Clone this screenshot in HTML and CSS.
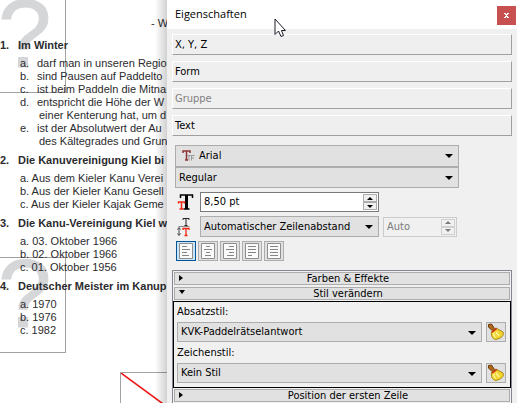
FILE: index.html
```html
<!DOCTYPE html>
<html lang="de">
<head>
<meta charset="utf-8">
<title>Eigenschaften</title>
<link rel="stylesheet" href="styles.css">
</head>
<body>
<svg class="defs" aria-hidden="true">
  <symbol id="broom" viewBox="0 0 18 18">
    <path d="M1.500 1.500 L4.500 1 L7.500 5.500 L5 7.500 L1.500 4 Z" fill="#b06a1c" stroke="#6b3b0a"/>
    <path d="M4.500 8.500 L9 5 L16 9 C17.500 12 14.500 15.500 8.500 16.500 C5 15.500 4 12.500 4.500 8.500 Z" fill="#f2d531" stroke="#a8860c"/>
    <path d="M6.500 10 L8 14.500 M9 9 L12 13" stroke="#fff59a" stroke-width="1.500" fill="none"/>
    <path d="M5 9 L9.500 5.500" stroke="#c8321e" stroke-width="1.600"/>
  </symbol>
</svg>
<div class="screen">
  <main class="page">
    <div class="frame frame-top"><span>?</span></div>
    <div class="frame frame-mid"><span>?</span></div>
    <div class="frame frame-empty"><svg viewBox="0 0 120 88"><path d="M0 0 L120 88" stroke="#f01414" stroke-width="1.500"/></svg></div>
    <div class="copy">
      <p class="intro">- W</p>
      <h2><b>1.</b>Im Winter</h2>
      <ul class="wide">
        <li><i>a.</i>darf man in unseren Regio</li>
        <li><i>b.</i>sind Pausen auf Paddelto</li>
        <li><i>c.</i>ist beim Paddeln die Mitna</li>
        <li><i>d.</i>entspricht die Höhe der W</li>
        <li class="cont">einer Kenterung hat, um d</li>
        <li><i>e.</i>ist der Absolutwert der Au</li>
        <li class="cont">des Kältegrades und Grun</li>
      </ul>
      <h2><b>2.</b>Die Kanuvereinigung Kiel bi</h2>
      <ul>
        <li>a. Aus dem Kieler Kanu Verei</li>
        <li>b. Aus der Kieler Kanu Gesell</li>
        <li>c. Aus der Kieler Kajak Geme</li>
      </ul>
      <h2><b>3.</b>Die Kanu-Vereinigung Kiel w</h2>
      <ul>
        <li>a. 03. Oktober 1966</li>
        <li>b. 02. Oktober 1966</li>
        <li>c. 01. Oktober 1956</li>
      </ul>
      <h2><b>4.</b>Deutscher Meister im Kanup</h2>
      <ul>
        <li>a. 1970</li>
        <li>b. 1976</li>
        <li>c. 1982</li>
      </ul>
    </div>
  </main>

  <aside class="panel">
    <header class="titlebar">
      <h1>Eigenschaften</h1>
      <button class="close" aria-label="Schließen"><svg width="5" height="5" viewBox="0 0 5 5"><path d="M0 .5H2M3 .5H5M1 1.500H4M2 2.500H3M1 3.500H4M0 4.500H2M3 4.500H5" stroke="#fff"/></svg></button>
    </header>
    <div class="body">
      <nav class="sections">
        <button>X, Y, Z</button>
        <button>Form</button>
        <button disabled>Gruppe</button>
        <button>Text</button>
      </nav>

      <div class="text-tools">
        <div class="fonts">
          <div class="combo font-family">
            <svg class="tt" width="13" height="12" viewBox="0 0 13 12"><path d="M1 3V1H8V3M4.500 1V10M3 10H6" fill="none" stroke="#8e3434" stroke-width="1.500"/><path d="M5 5.500H9M7 5.500V10.500M9.500 10.500V5.500H12.500M9.500 8H12" fill="none" stroke="#999"/></svg>
            <select aria-label="Schriftfamilie"><option>Arial</option></select>
          </div>
          <div class="combo"><select aria-label="Schriftschnitt"><option>Regular</option></select></div>
        </div>
        <div class="row">
          <svg class="tool-icon" width="18" height="18" viewBox="0 0 18 18"><path d="M4 5V2H16V5M7 16H13" fill="none" stroke="#000" stroke-width="1.500"/><path d="M10 2V16" stroke="#000" stroke-width="3"/><path d="M2 10.500V9H8V10.500M5 9V16M3 16H7" fill="none" stroke="#f02814" stroke-width="1.500"/></svg>
          <div class="spin size">
            <input type="text" value="8,50 pt" aria-label="Schriftgröße">
            <div class="steps"><button aria-label="Größer"></button><button class="down" aria-label="Kleiner"></button></div>
          </div>
        </div>
        <div class="row">
          <svg class="tool-icon" width="18" height="20" viewBox="0 0 18 20"><path d="M6.500 3V1.500H12.500V3M9.500 1.500V8.500M8 8.500H11" fill="none" stroke="#222"/><path d="M2 9.500H13" stroke="#888"/><path d="M2.500 11V18M1 12.500L2.500 10.500L4 12.500M1 16.500L2.500 18.500L4 16.500" fill="none" stroke="#444"/><path d="M6.500 13V11.500H12.500V13M9.500 11.500V18.500M8 18.500H11" fill="none" stroke="#f02814" stroke-width="1.300"/></svg>
          <div class="combo size"><select aria-label="Zeilenabstand"><option>Automatischer Zeilenabstand</option></select></div>
          <div class="spin auto">
            <input type="text" value="Auto" aria-label="Abstand" disabled>
            <div class="steps"><button disabled aria-label="Mehr"></button><button class="down" disabled aria-label="Weniger"></button></div>
          </div>
        </div>
        <div class="align">
          <button class="active" aria-label="Linksbündig"><svg viewBox="0 0 14 16"><path class="sheet" d="M.5 .5H13.500V15.500H.5Z"/><path d="M3 3.500H8M3 6.500H11M3 9.500H8M3 12.500H10"/></svg></button>
          <button aria-label="Zentriert"><svg viewBox="0 0 14 16"><path class="sheet" d="M.5 .5H13.500V15.500H.5Z"/><path d="M5 3.500H9M3 6.500H11M5 9.500H9M4 12.500H10"/></svg></button>
          <button aria-label="Rechtsbündig"><svg viewBox="0 0 14 16"><path class="sheet" d="M.5 .5H13.500V15.500H.5Z"/><path d="M6 3.500H11M3 6.500H11M6 9.500H11M4 12.500H11"/></svg></button>
          <button aria-label="Blocksatz"><svg viewBox="0 0 14 16"><path class="sheet" d="M.5 .5H13.500V15.500H.5Z"/><path d="M3 3.500H11M3 6.500H11M3 9.500H11M3 12.500H7"/></svg></button>
          <button aria-label="Erzwungener Blocksatz"><svg viewBox="0 0 14 16"><path class="sheet" d="M.5 .5H13.500V15.500H.5Z"/><path d="M3 3.500H11M3 6.500H11M3 9.500H11M3 12.500H11"/></svg></button>
        </div>
      </div>

      <div class="toolbox">
        <button class="fold">Farben &amp; Effekte</button>
        <button class="fold open">Stil verändern</button>
        <div class="styles">
          <label for="para">Absatzstil:</label>
          <div class="row">
            <div class="combo"><select id="para"><option>KVK-Paddelrätselantwort</option></select></div>
            <button class="clear" aria-label="Absatzstil zurücksetzen"><svg width="18" height="18"><use href="#broom"/></svg></button>
          </div>
          <label for="char">Zeichenstil:</label>
          <div class="row">
            <div class="combo"><select id="char"><option>Kein Stil</option></select></div>
            <button class="clear" aria-label="Zeichenstil zurücksetzen"><svg width="18" height="18"><use href="#broom"/></svg></button>
          </div>
        </div>
        <button class="fold">Position der ersten Zeile</button>
      </div>
    </div>
  </aside>
  <svg class="cursor" width="13" height="20" viewBox="0 0 13 20"><path d="M1 1V16.500L4.500 13L7 18.500L9.500 17.500L7.500 12.500H11.500Z" fill="#fff" stroke="#1c1c28"/></svg>
</div>
</body>
</html>
```

FILE: styles.css
```css
* { box-sizing: border-box; margin: 0; padding: 0; }

body {
  background: #fff;
  color: #000;
  font: 11px/14px "DejaVu Sans Condensed", "DejaVu Sans", sans-serif;
  overflow: hidden;
}

button, input, select { font: inherit; color: inherit; border-radius: 0; }
svg { display: block; flex: none; }
.defs { position: absolute; width: 0; height: 0; }

.screen {
  position: relative;
  display: grid;
  grid-template-columns: 167px minmax(0, 1fr);
  min-height: 100vh;
}

/* Document page */
.page {
  position: relative;
  overflow: hidden;
  font: 11px/13px "Liberation Sans", Arial, sans-serif;
  color: #2b2b2e;
  white-space: nowrap;
}
.page::after {
  content: "";
  position: absolute;
  inset: 0 0 0 auto;
  width: 12px;
  background: linear-gradient(to right, transparent, rgba(0, 0, 0, .18));
}
.frame {
  position: absolute;
  left: -30px;
  width: 96px;
  height: 96px;
  border: 1px solid #a2a2a2;
}
.frame span {
  display: block;
  padding-left: 27px;
  font-size: 96px;
  line-height: 72px;
  color: #d5d6d8;
  -webkit-text-stroke: 1px #d5d6d8;
}
.frame-top { top: -3px; }
.frame-mid { top: 257px; }
.frame-empty { top: 372px; left: 120px; width: 120px; height: 88px; }
.frame-empty svg { width: 120px; height: 88px; }

.copy { position: relative; padding-top: 17px; }
.intro { padding-left: 151px; margin-bottom: 9px; }
.copy h2 { display: flex; font-size: 11px; line-height: 13px; margin: 6px 0 5px; }
.copy h2 b { flex: none; width: 18px; }
.copy ul { list-style: none; padding-left: 20px; }
.wide li { display: flex; }
.wide i { flex: none; width: 17px; font-style: normal; }
.wide .cont { padding-left: 19px; }

/* Properties panel */
.panel { background: #f0f0f0; min-width: 0; }
.titlebar {
  display: flex;
  justify-content: space-between;
  align-items: center;
  height: 29px;
  padding: 2px 1px 0 8px;
  background: #fff;
}
.titlebar h1 { font: 11px/16px "Open Sans", "Noto Sans", sans-serif; padding-bottom: 3px; }
.close {
  display: grid;
  place-items: center;
  width: 19px;
  height: 19px;
  border: 0;
  background: #c75050;
}
.body { padding: 5px; }
.sections { display: grid; gap: 6px; }
.sections button {
  height: 21px;
  padding: 0 2px;
  text-align: left;
  background: #efefef;
  border: 1px solid #fff;
  border-right-color: #a0a0a0;
  border-bottom-color: #a0a0a0;
}
.sections button:disabled { color: #808080; }

.text-tools { display: grid; gap: 4px; padding: 9px 0 9px 3px; }
.fonts { max-width: 284px; }
.row { display: flex; align-items: center; gap: 4px; }
.tool-icon { width: 21px; }

.combo {
  position: relative;
  display: flex;
  align-items: center;
  flex: 1;
  min-width: 0;
  height: 21px;
  background: #e1e1e1;
  border: 1px solid #adadad;
}
.combo select {
  appearance: none;
  width: 100%;
  height: 100%;
  padding: 0 16px 0 3px;
  border: 0;
  background: none;
}
.combo::after {
  content: "";
  position: absolute;
  top: 8px;
  right: 5px;
  border: 4px solid transparent;
  border-top-color: #000;
  border-bottom: 0;
}
.font-family { height: 22px; padding-left: 6px; }
.tt { margin-right: 1px; }

.size { flex: 0 1 179px; }
.spin {
  display: flex;
  min-width: 0;
  height: 20px;
  padding: 1px;
  background: #fff;
  border: 1px solid #7a7a7a;
}
.spin input { flex: 1; min-width: 0; padding-left: 2px; border: 0; background: none; }
.steps { display: grid; width: 14px; }
.steps button {
  display: grid;
  place-items: center;
  min-height: 0;
  background: #f0f0f0;
  border: 1px solid #adadad;
}
.steps button::before {
  content: "";
  border: 3px solid transparent;
  border-top: 0;
  border-bottom-color: currentColor;
}
.steps .down::before { border-top: 3px solid; border-bottom: 0; }
.auto {
  flex: 0 1 74px;
  color: #7b7b7b;
  background: #f0f0f0;
  border-color: #cccccc;
}
.auto .steps button { border-color: #d0d0d0; }

.align { display: flex; gap: 2px; padding-left: 1px; }
.align button {
  display: grid;
  place-items: center;
  width: 20px;
  height: 20px;
  background: #e1e1e1;
  border: 1px solid #adadad;
}
.align svg { width: 14px; height: 16px; fill: none; stroke: #858585; }
.align .sheet { fill: #fafafa; stroke: #8e8e8e; }
.align .active { background: #cce4f7; border-color: #005499; }

.toolbox {
  display: grid;
  gap: 1px;
  padding: 1px 0;
  border: 1px solid #828790;
}
.fold {
  position: relative;
  height: 13px;
  margin: 0 1px;
  padding-left: 12px;
  line-height: 11px;
  background: #e1e1e1;
  border: 1px solid #adadad;
}
.fold:first-child { margin-bottom: 1px; }
.fold::before {
  content: "";
  position: absolute;
  left: 4px;
  top: 2px;
  border: 3px solid transparent;
  border-left: 4px solid #000;
  border-right: 0;
}
.fold.open::before {
  border: 3px solid transparent;
  border-top: 4px solid #000;
  border-bottom: 0;
}
.styles {
  display: grid;
  padding: 0 4px 3px 3px;
  border: 1px solid #000;
}
.styles label { line-height: 20px; }
.styles .row { margin-bottom: 1px; }
.clear {
  display: grid;
  place-items: center;
  width: 20px;
  height: 20px;
  background: #e1e1e1;
  border: 1px solid #adadad;
}
.styles .combo { height: 20px; }

.cursor { position: absolute; left: 274px; top: 18px; }
```
